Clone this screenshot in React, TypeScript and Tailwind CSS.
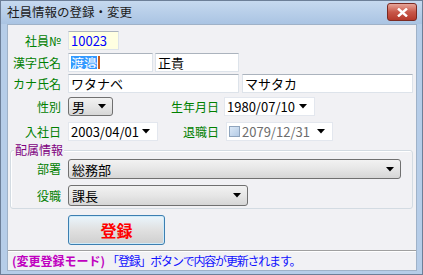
import React from "react";

const font = { fontFamily: '"Noto Sans CJK JP", "Noto Sans", sans-serif' };

function Arrow() {
  return (
    <svg width="8" height="5" viewBox="0 0 8 5" className="shrink-0">
      <path d="M0 0 H8 L4 4.5 Z" fill="#000" />
    </svg>
  );
}

function Label({ children, w }: { children: React.ReactNode; w: string }) {
  return (
    <div className={`${w} shrink-0 text-right text-[12px] leading-none text-[#008000]`}>
      {children}
    </div>
  );
}

function ComboList({ value, w }: { value: string; w: string }) {
  return (
    <div
      className={`${w} h-full flex items-center justify-between rounded-[3px] border border-[#707070] bg-gradient-to-b from-[#f2f2f2] via-[#e6e6e6] to-[#d6d6d6] pl-[3px] pr-[6px] text-[13px] leading-none text-black`}
    >
      <span>{value}</span>
      <Arrow />
    </div>
  );
}

function DatePick({ value, w, check }: { value: string; w: string; check?: boolean }) {
  return (
    <div
      className={`${w} h-full flex items-center justify-between border border-[#e3e7ee] bg-white pl-[2px] pr-[7px] text-[13px] leading-none`}
    >
      <div className="flex items-center gap-[2px]">
        {check && (
          <span className="h-[11px] w-[11px] border border-[#8fa4bd] bg-gradient-to-br from-[#dbe8f6] to-[#b4cbe6]" />
        )}
        <span className={check ? "text-[#6d6d6d]" : "text-black"}>{value}</span>
      </div>
      <Arrow />
    </div>
  );
}

function TextBox({ children, w, bg = "bg-white" }: { children: React.ReactNode; w: string; bg?: string }) {
  return (
    <div
      className={`${w} ${bg} h-full flex items-center border border-[#dde3ea] border-t-[#abb3bd] px-[2px] text-[13px] leading-none text-black`}
    >
      {children}
    </div>
  );
}

export default function App() {
  return (
    <div
      className="w-[423px] h-[275px] flex flex-col bg-[#b6cde8] border border-[#6d7f98] overflow-hidden"
      style={font}
    >
      {/* Title bar */}
      <div className="h-[23px] shrink-0 flex items-center justify-between bg-gradient-to-b from-[#c6d9ef] to-[#aac4e3] pl-[6px] pr-[5px]">
        <span className="text-[12.5px] leading-none text-[#1b1b1b]">社員情報の登録・変更</span>
        <div className="mt-[-1px] h-[18px] w-[30px] flex items-center justify-center rounded-[3px] border border-[#7a2a22] bg-gradient-to-b from-[#e6a59a] via-[#c8584a] to-[#b5392b]">
          <svg width="11" height="9" viewBox="0 0 11 9">
            <path d="M1 0.5 L10 8.5 M10 0.5 L1 8.5" stroke="#fff" strokeWidth="2.4" />
          </svg>
        </div>
      </div>

      <div className="flex flex-1">
        <div className="w-[6px] shrink-0" />
        {/* Client */}
        <div className="flex-1 flex flex-col bg-[#f1f1f4] border border-[#9fb2c8]">
          {/* 社員No */}
          <div className="mt-[6px] h-[19px] flex items-center">
            <Label w="w-[53px]">社員№</Label>
            <div className="ml-[7px] h-full">
              <TextBox w="w-[51px]" bg="bg-[#ffffe1]">
                <span className="text-[#0000ff]">10023</span>
              </TextBox>
            </div>
          </div>

          {/* 漢字氏名 */}
          <div className="mt-[3px] h-[19px] flex items-center">
            <Label w="w-[53px]">漢字氏名</Label>
            <div className="ml-[7px] h-full flex gap-[2px]">
              <TextBox w="w-[85px]">
                <span className="bg-[#3399ff] text-white">渡邉</span>
                <span className="ml-[1px] h-[13px] w-[2px] bg-[#c45a1e]" />
              </TextBox>
              <TextBox w="w-[84px]">正貴</TextBox>
            </div>
          </div>

          {/* カナ氏名 */}
          <div className="mt-[2px] h-[19px] flex items-center">
            <Label w="w-[53px]">カナ氏名</Label>
            <div className="ml-[7px] h-full flex gap-[3px]">
              <TextBox w="w-[171px]">ワタナベ</TextBox>
              <TextBox w="w-[171px]">マサタカ</TextBox>
            </div>
          </div>

          {/* 性別 / 生年月日 */}
          <div className="mt-[4px] h-[19px] flex items-center">
            <Label w="w-[53px]">性別</Label>
            <div className="ml-[7px] h-full">
              <ComboList value="男" w="w-[45px]" />
            </div>
            <Label w="w-[106px]">生年月日</Label>
            <div className="ml-[5px] h-full">
              <DatePick value="1980/07/10" w="w-[91px]" />
            </div>
          </div>

          {/* 入社日 / 退職日 */}
          <div className="mt-[6px] h-[19px] flex items-center">
            <Label w="w-[53px]">入社日</Label>
            <div className="ml-[7px] h-full">
              <DatePick value="2003/04/01" w="w-[90px]" />
            </div>
            <Label w="w-[61px]">退職日</Label>
            <div className="ml-[7px] h-full">
              <DatePick value="2079/12/31" w="w-[107px]" check />
            </div>
          </div>

          {/* 配属情報 group */}
          <div className="relative mt-[9px] ml-[2px] mr-[3px] rounded-[3px] border border-[#d3dbe2] pt-[8px] pb-[2px] shadow-[inset_1px_1px_0_#ffffff]">
            <span className="absolute left-[3px] top-[-7px] bg-[#f1f1f4] px-[1px] text-[12px] leading-none text-[#800080]">
              配属情報
            </span>
            <div className="h-[20px] flex items-center">
              <Label w="w-[50px]">部署</Label>
              <div className="ml-[7px] h-full">
                <ComboList value="総務部" w="w-[333px]" />
              </div>
            </div>
            <div className="mt-[6px] h-[21px] flex items-center">
              <Label w="w-[50px]">役職</Label>
              <div className="ml-[7px] h-full">
                <ComboList value="課長" w="w-[180px]" />
              </div>
            </div>
          </div>

          {/* 登録 button */}
          <div className="mt-[6px] ml-[60px] h-[30px] w-[97px] flex items-center justify-center rounded-[3px] border border-[#3c7fb1] bg-gradient-to-b from-[#eaf6fd] via-[#e0e0e0] to-[#cfcfcf] shadow-[inset_0_0_0_1px_#cfeaf9]">
            <span className="text-[16px] font-bold leading-none text-[#ff0000]">登録</span>
          </div>

          {/* status */}
          <div className="mt-[5px] border-t border-[#a0a0a0] shadow-[inset_0_1px_0_#ffffff] flex-1 flex items-center px-[4px] text-[12px] leading-none">
            <span className="font-bold text-[#c000c0]">(変更登録モード)</span>
            <span className="ml-[2px] text-[#1010ff] tracking-[-1.2px]">「登録」ボタンで内容が更新されます。</span>
          </div>
        </div>
        <div className="w-[5px] shrink-0" />
      </div>
      <div className="h-[3px] shrink-0" />
    </div>
  );
}
